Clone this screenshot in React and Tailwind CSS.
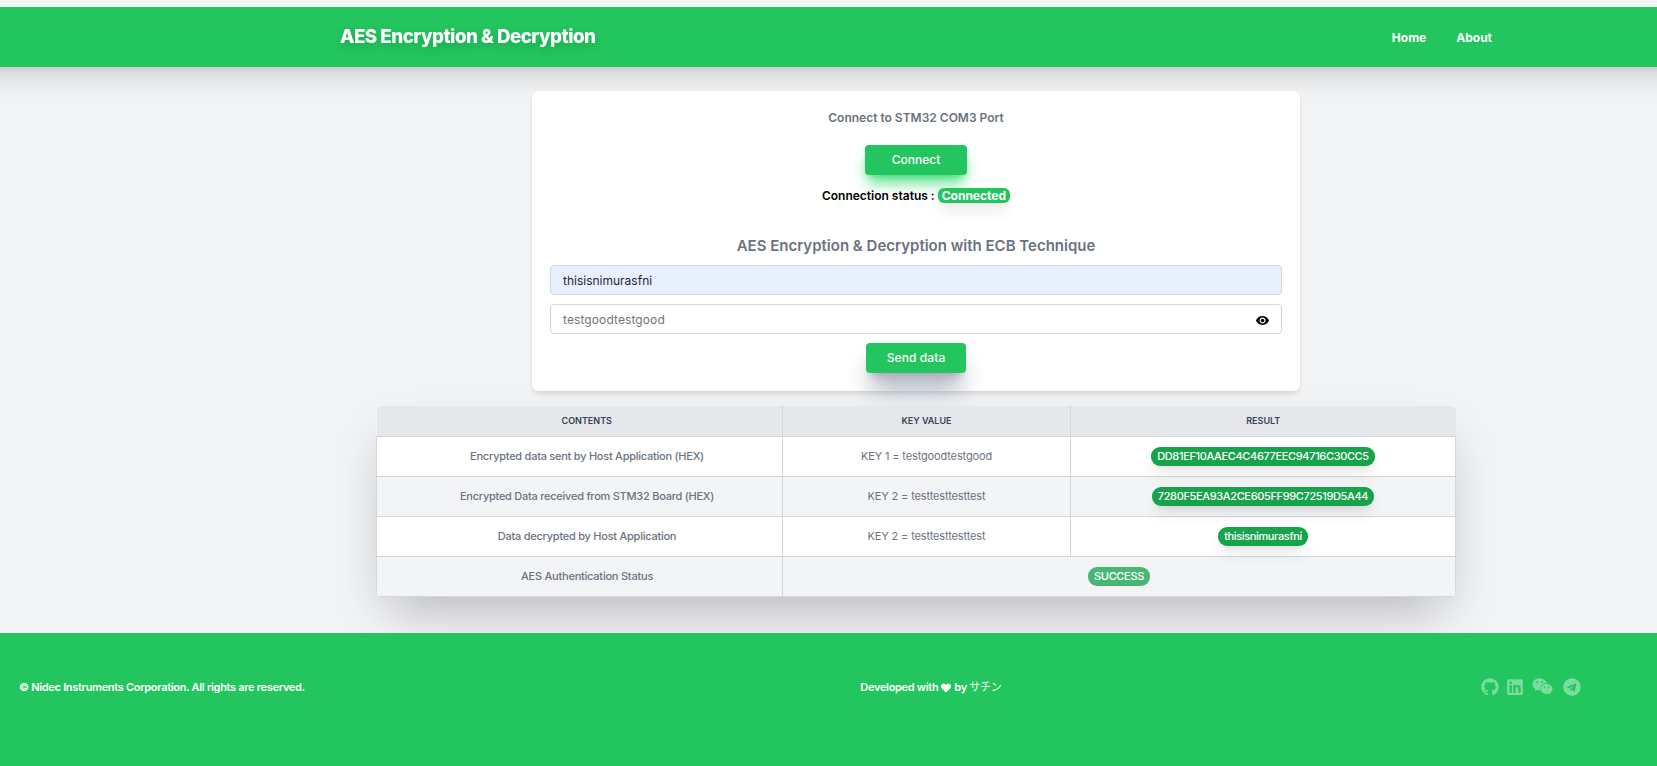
import { FaGithub, FaLinkedin, FaWeixin, FaTelegram, FaHeart } from "react-icons/fa";
import { IoMdEye } from "react-icons/io";

const rows = [
  ["Encrypted data sent by Host Application (HEX)", "KEY 1 = testgoodtestgood", "DD81EF10AAEC4C4677EEC94716C30CC5"],
  ["Encrypted Data received from STM32 Board (HEX)", "KEY 2 = testtesttesttest", "7280F5EA93A2CE605FF99C72519D5A44"],
  ["Data decrypted by Host Application", "KEY 2 = testtesttesttest", "thisisnimurasfni"],
];

function Navbar() {
  return (
    <header className="-mx-10 mt-[7px] flex h-[60px] shrink-0 items-center justify-between bg-[#22c55e] pr-[205px] pl-[380px] text-white shadow-[0_20px_25px_-5px_rgb(0_0_0/0.1),0_8px_10px_-6px_rgb(0_0_0/0.1)]">
      <h1 className="text-[18.75px] leading-[26px] font-extrabold tracking-[-0.51px] drop-shadow-lg">
        AES Encryption &amp; Decryption
      </h1>
      <nav className="flex gap-[30px] pt-px text-[12px] leading-[19px] font-bold">
        <a href="#home">Home</a>
        <a href="#about">About</a>
      </nav>
    </header>
  );
}

function ConnectionCard() {
  return (
    <section className="mt-6 ml-[532px] flex h-[300px] w-[768px] shrink-0 flex-col items-center rounded-md bg-white px-[18px] shadow-md">
      <p className="mt-[17px] text-[12px] leading-5 font-semibold text-[#6b7280]">Connect to STM32 COM3 Port</p>
      <button className="mt-[17px] h-[30px] w-[102px] shrink-0 rounded bg-[#22c55e] text-[12px] font-medium text-white shadow-[0_10px_15px_-3px_#4ade80,0_4px_6px_-4px_#4ade80]">
        Connect
      </button>
      <p className="mt-[11px] flex items-center gap-[3px] text-[12px] leading-5 font-semibold text-black">
        Connection status :
        <span className="mb-px h-[15px] rounded-md bg-[#22c55e] px-[4px] leading-[15px] font-bold text-white shadow-lg">Connected</span>
      </p>
      <h2 className="mt-[27px] text-[15px] leading-[26px] font-semibold text-[#6b7280]">
        AES Encryption &amp; Decryption with ECB Technique
      </h2>
      <div className="mt-[6px] flex h-[30px] w-[732px] shrink-0 items-center rounded border border-gray-300 bg-[#e8f0fe] px-3 pt-0.5 text-[12px] text-gray-800">
        thisisnimurasfni
      </div>
      <div className="mt-[9px] flex h-[30px] w-[732px] shrink-0 items-center justify-between rounded border border-gray-300 bg-white pt-0.5 pr-[11px] pl-3 text-[12px] tracking-[0.1px] text-[#757575]">
        testgoodtestgood
        <IoMdEye className="size-[15px] text-black" />
      </div>
      <button className="mt-[9px] h-[30px] w-[100px] shrink-0 rounded bg-[#22c55e] text-[12px] font-medium tracking-[0.1px] text-white shadow-[0_20px_25px_-5px_#9ca3af,0_8px_10px_-6px_#9ca3af]">
        Send data
      </button>
    </section>
  );
}

function ResultTable() {
  return (
    <div className="relative mt-[15px] ml-[376px] h-[191px] w-[1080px] shrink-0 overflow-hidden rounded-md shadow-2xl">
      <table className="w-full table-fixed border-collapse text-center text-[11px] leading-[15px] tracking-[-0.14px] text-[#6b7280]">
        <colgroup>
          <col className="w-[406px]" />
          <col className="w-[288px]" />
          <col />
        </colgroup>
        <thead>
          <tr className="h-[30px] bg-gray-200 text-[9px] tracking-normal text-gray-700">
            <th className="border-r border-b border-gray-300 pl-[15px] font-semibold">CONTENTS</th>
            <th className="border-r border-b border-gray-300 font-semibold">KEY VALUE</th>
            <th className="border-b border-gray-300 font-semibold">RESULT</th>
          </tr>
        </thead>
        <tbody>
          {rows.map(([label, key, value]) => (
            <tr key={label} className="h-10 bg-white even:bg-gray-100">
              <td className="border border-gray-300 pl-[15px] font-medium tracking-[-0.25px]">{label}</td>
              <td className="border border-gray-300">{key}</td>
              <td className="border border-gray-300">
                <span className="inline-block h-[19px] rounded-[9px] bg-[#16a34a] px-[6px] leading-[19px] font-medium tracking-[-0.36px] text-white shadow-lg">{value}</span>
              </td>
            </tr>
          ))}
          <tr className="h-10 bg-gray-100">
            <td className="border border-gray-300 pl-[15px] font-medium tracking-[-0.22px]">AES Authentication Status</td>
            <td colSpan={2} className="border border-gray-300">
              <span className="inline-block h-[19px] rounded-[9px] bg-[#48b774] px-[6px] leading-[19px] font-medium tracking-[-0.34px] text-white">SUCCESS</span>
            </td>
          </tr>
        </tbody>
      </table>
    </div>
  );
}

function Footer() {
  return (
    <footer className="relative mt-9 grid h-[133px] shrink-0 grid-cols-3 bg-[#22c55e] pt-[47px] text-[11px] leading-[15px] font-semibold tracking-[-0.31px] text-white">
      <p className="pl-[19px]">© Nidec Instruments Corporation. All rights are reserved.</p>
      <p className="flex items-center self-start pl-[308px] whitespace-nowrap">
        Developed with
        <FaHeart className="mr-[3px] ml-[3px] size-[10px]" />
        by&nbsp;<span className="font-normal">サチン</span>
      </p>
      <div className="-mt-[4px] flex items-center self-start pl-[376px] text-white/40">
        <FaGithub className="size-[18px]" />
        <FaLinkedin className="ml-[7px] size-[18px]" />
        <FaWeixin className="ml-[8px] size-[21px]" />
        <FaTelegram className="ml-[10px] size-[18px]" />
      </div>
    </footer>
  );
}

export default function App() {
  return (
    <div className="flex h-[766px] flex-col overflow-hidden bg-gray-100 font-['Inter','Noto_Sans_CJK_JP',sans-serif]">
      <Navbar />
      <ConnectionCard />
      <ResultTable />
      <Footer />
    </div>
  );
}
